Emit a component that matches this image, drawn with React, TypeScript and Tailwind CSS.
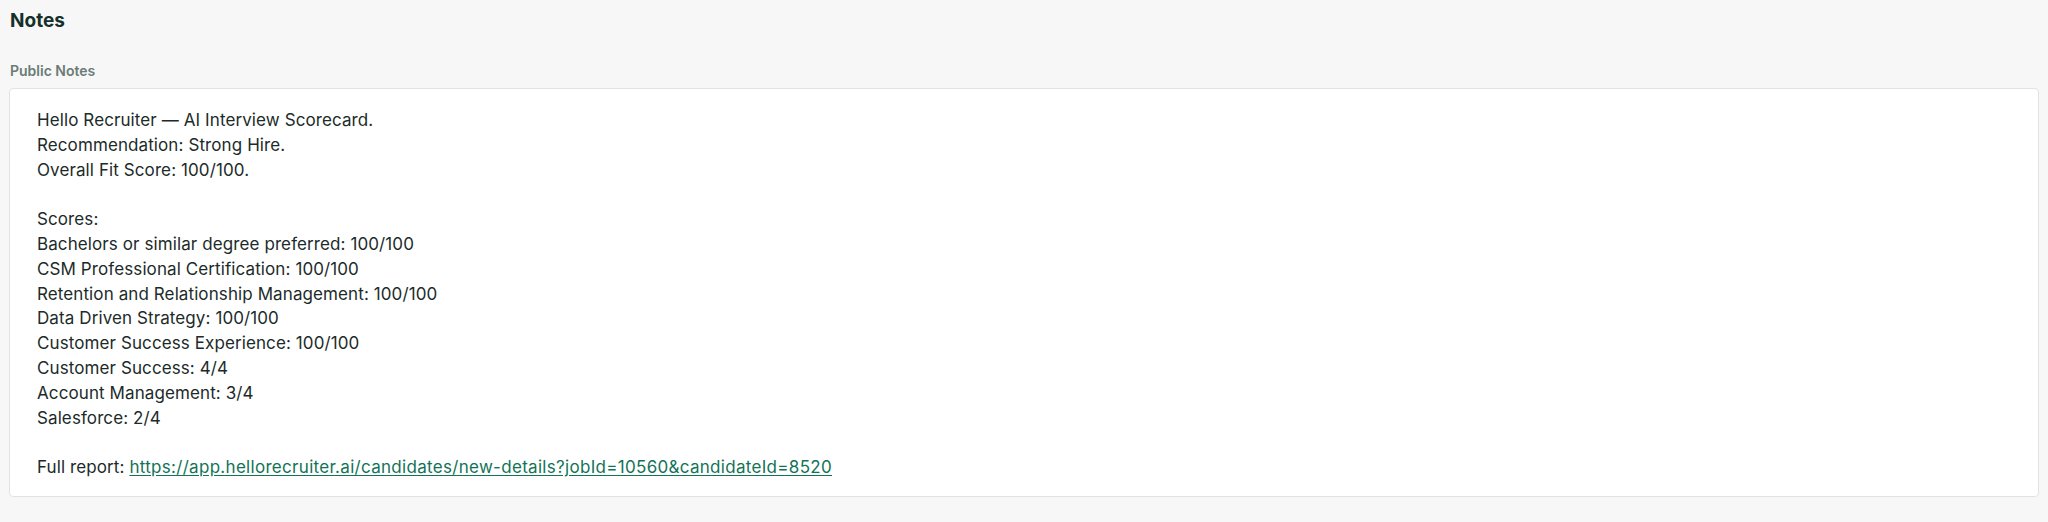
import React from 'react';

const lines: string[] = [
  'Hello Recruiter — AI Interview Scorecard.',
  'Recommendation: Strong Hire.',
  'Overall Fit Score: 100/100.',
  '',
  'Scores:',
  'Bachelors or similar degree preferred: 100/100',
  'CSM Professional Certification: 100/100',
  'Retention and Relationship Management: 100/100',
  'Data Driven Strategy: 100/100',
  'Customer Success Experience: 100/100',
  'Customer Success: 4/4',
  'Account Management: 3/4',
  'Salesforce: 2/4',
  '',
];

const reportUrl = 'https://app.hellorecruiter.ai/candidates/new-details?jobId=10560&candidateId=8520';

const App: React.FC = () => {
  return (
    <div className="min-h-[522px] w-full bg-[#f7f7f7] font-['Inter','Noto_Sans',sans-serif]">
      <div className="px-[9px] pt-[9px]">
        <h2 className="pl-px text-[19px] font-bold leading-[24px] text-[#15302a]">Notes</h2>
        <div className="mt-[29px] pl-px text-[14px] font-semibold leading-[17px] text-[#6b7c76]">Public Notes</div>
        <div className="mt-[9px] rounded-[4px] border border-[#e3e3e3] bg-white px-[27px] pt-[19px] pb-[16px] text-[17px] leading-[24.8px] tracking-[0.1px] text-[#1c2b2a]">
          {lines.map((line, i) => (
            <div key={i} className="h-[24.8px]">{line}</div>
          ))}
          <div className="h-[24.8px]">
            Full report:{' '}
            <a href="#" className="tracking-[0.3px] text-[#127357] underline underline-offset-2">
              {reportUrl}
            </a>
          </div>
        </div>
      </div>
    </div>
  );
};

export default App;
